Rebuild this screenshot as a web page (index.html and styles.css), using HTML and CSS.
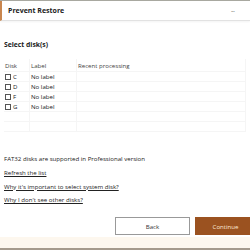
FILE: index.html
```html
<!DOCTYPE html>
<html lang="en">
<head>
    <meta charset="UTF-8">
    <title>Prevent Restore</title>
    <link rel="stylesheet" href="styles.css">
</head>
<body>
    <div class="window">
        <div class="titlebar">
            <span class="title">Prevent Restore</span>
            <span class="menu">&middot;&middot;&middot;</span>
        </div>

        <div class="content">
            <h3>Select disk(s)</h3>
            <table class="disks">
                <tr><th class="c1">Disk</th><th class="c2">Label</th><th>Recent processing</th></tr>
                <tr><td><span class="box"></span>C</td><td>No label</td><td></td></tr>
                <tr><td><span class="box"></span>D</td><td>No label</td><td></td></tr>
                <tr><td><span class="box"></span>F</td><td>No label</td><td></td></tr>
                <tr><td><span class="box"></span>G</td><td>No label</td><td></td></tr>
                <tr class="empty"><td></td><td></td><td></td></tr>
                <tr class="empty"><td></td><td></td><td></td></tr>
            </table>

            <p class="note">FAT32 disks are supported in Professional version</p>
            <a href="#">Refresh the list</a>
            <a href="#">Why it's important to select system disk?</a>
            <a href="#">Why I don't see other disks?</a>
        </div>

        <div class="buttons">
            <button class="back">Back</button>
            <button class="next">Continue</button>
        </div>
        <div class="footer"></div>
    </div>
</body>
</html>
```

FILE: styles.css
```css
body {
    margin: 0;
    font-family: "Open Sans", "Noto Sans", sans-serif;
    font-size: 6.1px;
    color: #222;
    background: #fff;
}
.window {
    width: 250px;
    height: 250px;
    display: flex;
    flex-direction: column;
    border-top: 1px solid #a8a8a0;
    box-sizing: border-box;
    overflow: hidden;
}
.titlebar {
    height: 19px;
    display: flex;
    align-items: center;
    justify-content: space-between;
    padding: 0 16px 0 6px;
    border-left: 2px solid #c9864e;
    border-bottom: 1px solid #e2e2e2;
    box-shadow: 0 1px 2px rgba(0, 0, 0, 0.05);
}
.title {
    font-weight: bold;
    font-size: 7px;
}
.menu {
    color: #777;
    font-size: 8px;
    letter-spacing: -1px;
}
.content {
    padding: 0 4px;
    flex: 1;
}
h3 {
    font-size: 6.8px;
    margin: 19px 0 10px 0;
}
.disks {
    width: 100%;
    border-collapse: collapse;
    margin-bottom: 22px;
}
.disks th, .disks td {
    height: 9px;
    padding: 0 1px;
    text-align: left;
    font-weight: normal;
    border-right: 1px solid #f5f5f5;
    border-bottom: 1px solid #f5f5f5;
    line-height: 9px;
}
.disks th {
    height: 12px;
    color: #444;
}
.c1 { width: 23px; }
.c2 { width: 44px; }
.box {
    display: inline-block;
    width: 6px;
    height: 6px;
    border: 1px solid #555;
    margin-right: 2px;
    vertical-align: -1px;
    box-sizing: border-box;
    background: #fff;
}
.note {
    margin: 0 0 5px 0;
}
.content a {
    display: block;
    color: #222;
    text-decoration: underline;
    margin-bottom: 4.5px;
}
.buttons {
    display: flex;
    justify-content: flex-end;
    gap: 5px;
    padding: 0 0 2px 0;
    margin-right: -6px;
}
.buttons button {
    height: 18px;
    font-family: inherit;
    font-size: 6.1px;
    border: 1px solid #999;
    background: #fff;
    color: #333;
}
.back { width: 75px; }
.next {
    width: 61px;
    background: #9b5220 !important;
    border-color: #9b5220 !important;
    color: #fbe9d6 !important;
}
.footer {
    height: 11px;
    background: #fdf7ee;
    border-bottom: 2px solid #a59a8c;
}
```
